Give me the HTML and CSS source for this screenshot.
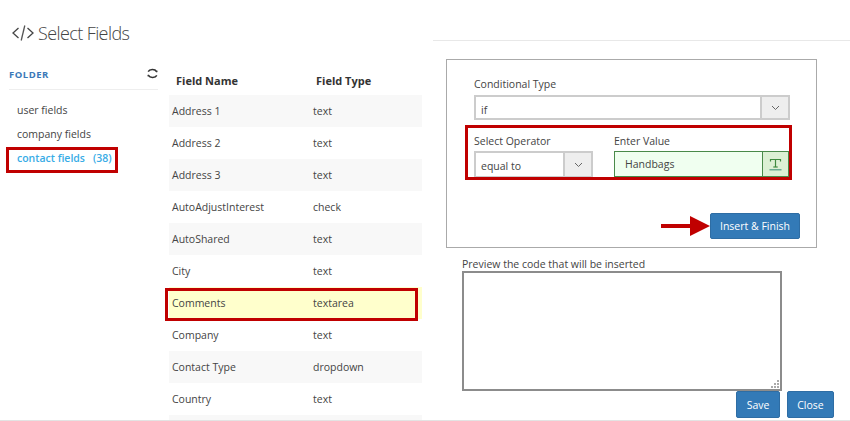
FILE: index.html
```html
<!DOCTYPE html>
<html lang="en">
<head>
<meta charset="utf-8">
<title>Select Fields</title>
<link rel="stylesheet" href="styles.css">
</head>
<body>
<div class="app">
  <header class="head">
    <svg class="code-icon" width="22" height="18" viewBox="0 0 22 18" fill="none" stroke="#444" stroke-width="1.300"><path d="M6.500 4 1 9l5.500 5"/><path d="M15.500 4 21 9l-5.500 5"/><path d="M12.800 1.500 9.200 16.500" stroke="#555"/></svg>
    <h1 class="title">Select Fields</h1>
  </header>
  <main class="main">
    <aside class="side">
      <div class="side-head">
        <span class="folder">FOLDER</span>
        <svg class="refresh" width="11" height="11" viewBox="0 0 11 11" fill="none" stroke="#333" stroke-width="1.500"><path d="M1.200 3.600C2.500 1 8 .7 9.600 3.600"/><path d="M8.300 2.800h2.500L9.900 4.800z" fill="#333" stroke="none"/><path d="M9.800 7.400C8.500 10 3 10.300 1.400 7.400"/><path d="M2.700 8.200H.2L1.100 6.200z" fill="#333" stroke="none"/></svg>
      </div>
      <ul class="folders">
        <li>user fields</li>
        <li>company fields</li>
        <li class="active"><span>contact fields</span><span>(38)</span></li>
      </ul>
    </aside>
    <section class="fields">
      <table class="grid">
        <thead><tr><th class="c1">Field Name</th><th class="c2">Field Type</th></tr></thead>
        <tbody>
          <tr><td>Address 1</td><td>text</td></tr>
          <tr><td>Address 2</td><td>text</td></tr>
          <tr><td>Address 3</td><td>text</td></tr>
          <tr><td>AutoAdjustInterest</td><td>check</td></tr>
          <tr><td>AutoShared</td><td>text</td></tr>
          <tr><td>City</td><td>text</td></tr>
          <tr class="picked"><td>Comments</td><td>textarea</td></tr>
          <tr><td>Company</td><td>text</td></tr>
          <tr><td>Contact Type</td><td>dropdown</td></tr>
          <tr><td>Country</td><td>text</td></tr>
          <tr><td>&nbsp;</td><td>&nbsp;</td></tr>
        </tbody>
      </table>
    </section>
    <section class="right">
      <div class="panel">
        <label class="lbl">Conditional Type</label>
        <div class="select wide">
          <span class="val">if</span>
          <span class="arrow"><svg width="9" height="6" viewBox="0 0 9 6" fill="none" stroke="#666" stroke-width="1"><path d="M1 1l3.500 3.500L8 1"/></svg></span>
        </div>
        <div class="pair">
          <div class="op">
            <label class="lbl">Select Operator</label>
            <div class="select">
              <span class="val">equal to</span>
              <span class="arrow"><svg width="9" height="6" viewBox="0 0 9 6" fill="none" stroke="#666" stroke-width="1"><path d="M1 1l3.500 3.500L8 1"/></svg></span>
            </div>
          </div>
          <div class="ev">
            <label class="lbl">Enter Value</label>
            <div class="value">
              <span class="val-text">Handbags</span>
              <span class="addon"><svg width="13" height="13" viewBox="0 0 13 13" fill="none" stroke="#3f8a3f" stroke-width="1.200"><path d="M1.500 3.500V1.500h10v2"/><path d="M6.500 1.500v7.500"/><path d="M4.300 9h4.400"/><path d="M0.500 11.800h12" stroke="#4f9a80"/></svg></span>
            </div>
          </div>
        </div>
        <div class="actions"><button class="btn insert" type="button">Insert &amp; Finish</button></div>
      </div>
      <div class="preview">
        <label class="plbl">Preview the code that will be inserted</label>
        <div class="code-wrap">
          <textarea class="code"></textarea>
          <svg class="grip" width="8" height="8" viewBox="0 0 8 8" fill="#aaa"><rect x="6" y="0" width="2" height="2"/><rect x="3" y="3" width="2" height="2"/><rect x="6" y="3" width="2" height="2"/><rect x="0" y="6" width="2" height="2"/><rect x="3" y="6" width="2" height="2"/><rect x="6" y="6" width="2" height="2"/></svg>
        </div>
      </div>
      <div class="foot">
        <button class="btn save" type="button">Save</button>
        <button class="btn close" type="button">Close</button>
      </div>
    </section>
  </main>
  <div class="mark mark-folder"></div>
  <div class="mark mark-row"></div>
  <div class="mark mark-pair"></div>
  <svg class="pointer" width="50" height="20" viewBox="0 0 50 20"><path d="M0 8h29V0l20 10-20 10v-8H0z" fill="#c00000"/></svg>
</div>
</body>
</html>
```

FILE: styles.css
```css
* { box-sizing: border-box; }
html, body { margin: 0; padding: 0; }
body {
  font-family: "Open Sans", "Liberation Sans", sans-serif;
  font-size: 11px;
  color: #444;
  background: #fff;
  overflow: hidden;
}
.app {
  position: relative;
  width: 850px;
  height: 421px;
  overflow: hidden;
  border-bottom: 1px solid #e3e3e3;
}
.head {
  height: 40px;
  padding: 17px 0 0 12px;
  display: flex;
  align-items: flex-start;
  gap: 4px;
}
.code-icon { margin-top: 7px; }
.title {
  margin: 0;
  font-size: 18px;
  font-weight: 300;
  line-height: 32px;
  letter-spacing: -0.6px;
  color: #444;
  height: 32px;
}
.main { display: flex; align-items: flex-start; height: 380px; }
.side { width: 149px; margin-left: 9px; flex: none; }
.side-head {
  height: 50px;
  border-bottom: 1px solid #eee;
  padding-top: 25px;
  display: flex;
  justify-content: space-between;
  align-items: flex-start;
}
.folder {
  font-size: 9.500px;
  font-weight: 700;
  letter-spacing: 0.500px;
  line-height: 20px;
  color: #3a78b8;
}
.refresh { margin-top: 3px; }
.folders { list-style: none; margin: 8px 0 0; padding: 0 0 0 8px; }
.folders li { height: 24px; line-height: 24px; font-size: 10.500px; color: #444; white-space: nowrap; }
.folders .active { color: #38ace6; font-weight: 600; display: flex; gap: 8px; }
.fields { width: 253px; margin-left: 11px; flex: none; }
.grid { width: 253px; border-collapse: collapse; table-layout: fixed; }
.grid th {
  height: 55px;
  padding: 34px 0 0 7px;
  font-size: 11px;
  font-weight: 700;
  color: #333;
  text-align: left;
  vertical-align: top;
  line-height: 14px;
}
.grid .c1 { width: 144px; }
.grid td { height: 32px; padding: 0 0 0 3px; font-size: 10.500px; color: #444; }
.grid td + td { padding-left: 0; }
.grid th + th { padding-left: 3px; }
.grid tbody tr:nth-child(odd) { background: #f8f8f8; }
.grid tbody .picked:nth-child(odd) { background: #ffffcc; }
.right { flex: 1; border-top: 1px solid #e8e8e8; margin-left: 11px; height: 380px; }
.panel {
  width: 371px;
  height: 189px;
  margin: 18px 0 0 13px;
  border: 1px solid #aaa;
  padding: 16px 27px 0;
}
.lbl { display: block; font-size: 10.500px; line-height: 16px; color: #444; }
.select {
  display: flex;
  height: 25px;
  border: 2px solid #ccc;
  background: #fff;
  margin-top: 3px;
}
.wide { width: 316px; }
.val { flex: 1; padding-left: 5px; line-height: 26px; font-size: 10.500px; }
.arrow {
  width: 28px;
  background: #eee;
  border-left: 2px solid #ccc;
  display: flex;
  align-items: center;
  justify-content: center;
}
.pair { display: flex; margin-top: 13px; }
.op { width: 119px; }
.ev { width: 175px; margin-left: 21px; }
.pair .select { height: 26px; margin-top: 2px; border-bottom-width: 1px; }
.value {
  display: flex;
  height: 26px;
  margin-top: 2px;
  border: 1px solid #4a8a4a;
  background: #f0fff0;
}
.val-text { flex: 1; padding-left: 10px; line-height: 25px; font-size: 10.500px; }
.addon {
  width: 26px;
  background: #dcf0d4;
  border-left: 1px solid #4a8a4a;
  display: flex;
  align-items: center;
  justify-content: center;
}
.actions { display: flex; justify-content: flex-end; width: 326px; margin-top: 36px; }
.btn {
  font-family: inherit;
  font-size: 10.500px;
  color: #fff;
  background: #337ab7;
  border: 1px solid #2e6da4;
  border-radius: 2px;
  padding: 0;
  height: 26px;
}
.insert { width: 90px; }
.preview { margin: 8px 0 0 29px; width: 320px; }
.plbl { display: block; font-size: 10.500px; line-height: 17px; height: 15px; color: #444; white-space: nowrap; }
.code-wrap { position: relative; height: 120px; }
.code {
  display: block;
  width: 320px;
  height: 120px;
  border: 2px solid #8c8c8c;
  border-radius: 0;
  background: #fff;
  margin: 0;
  resize: none;
}
.grip { position: absolute; right: 3px; bottom: 3px; }
.foot { display: flex; gap: 7px; margin-left: 303px; }
.save { width: 44px; height: 27px; }
.close { width: 47px; height: 27px; }
.mark { position: absolute; border: 3px solid #c00000; }
.mark-folder { left: 6px; top: 147px; width: 112px; height: 26px; }
.mark-row { left: 165px; top: 288px; width: 253px; height: 33px; }
.mark-pair { left: 465px; top: 125px; width: 327px; height: 55px; }
.pointer { position: absolute; left: 661px; top: 216px; }
```
